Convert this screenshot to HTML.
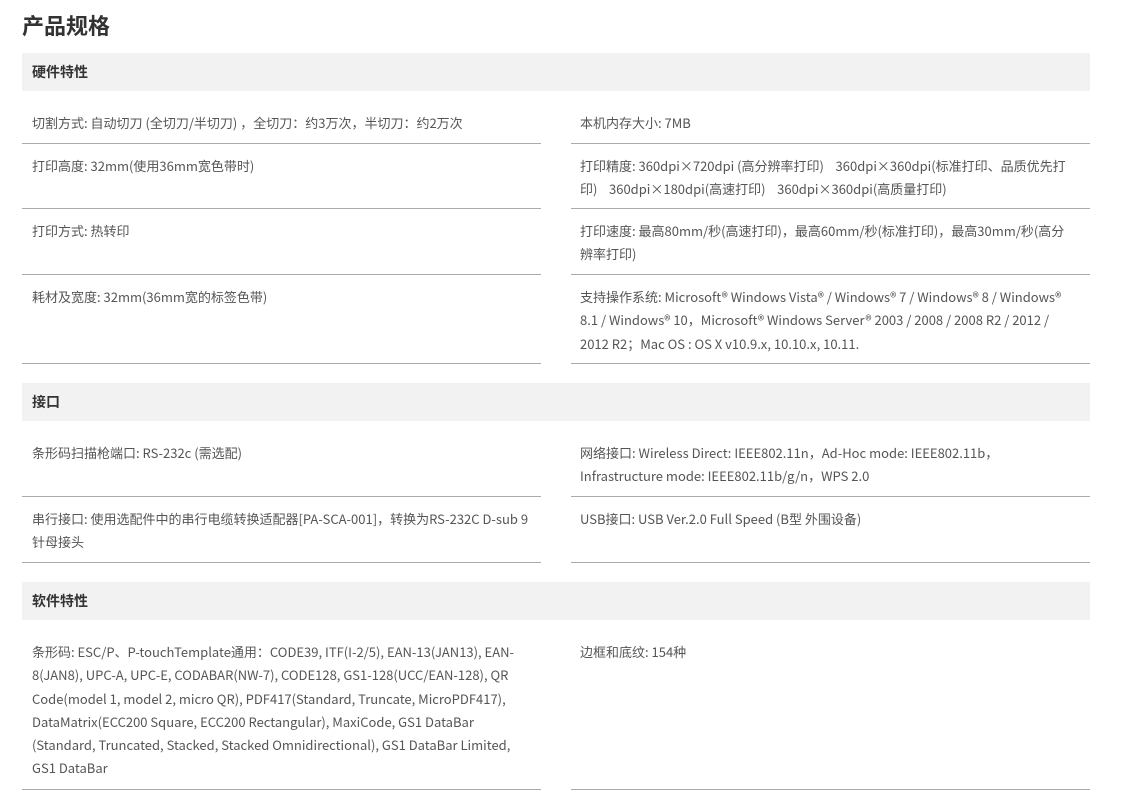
<html><head><style>
body{margin:0;background:#fff;font-family:"Liberation Sans","Noto Sans CJK SC",sans-serif;width:1124px;height:802px;position:relative;overflow:hidden}
h1{position:absolute;left:22px;top:9px;margin:0;font-size:22px;font-weight:bold;color:#333;line-height:32px;font-family:"Noto Sans CJK SC",sans-serif}
.h{position:absolute;left:22px;width:1068px;height:38px;background:#f2f2f2;font-size:14px;font-weight:bold;color:#333;line-height:38px;box-sizing:border-box;padding-left:10px;font-family:"Noto Sans CJK SC",sans-serif}
.c{position:absolute;width:519px;box-sizing:border-box;padding:10px 10px 0 10px;font-size:13px;line-height:23.3px;color:#555;border-bottom:1px solid #ababab;font-family:"Noto Sans CJK SC",sans-serif}
.l{left:22px}.r{left:571px;padding-left:9px;padding-right:13px}
</style></head><body>
<h1>产品规格</h1>
<div class="h" style="top:53px">硬件特性</div>
<div class="c l" style="top:101px;height:43px">切割方式: 自动切刀 (全切刀/半切刀) ，全切刀：约3万次，半切刀：约2万次</div>
<div class="c r" style="top:101px;height:43px">本机内存大小: 7MB</div>
<div class="c l" style="top:144px;height:65px">打印高度: 32mm(使用36mm宽色带时)</div>
<div class="c r" style="top:144px;height:65px">打印精度: 360dpi×720dpi (高分辨率打印)&nbsp;&nbsp;&nbsp; 360dpi×360dpi(标准打印、品质优先打印)&nbsp;&nbsp;&nbsp; 360dpi×180dpi(高速打印)&nbsp;&nbsp;&nbsp; 360dpi×360dpi(高质量打印)</div>
<div class="c l" style="top:209px;height:66px">打印方式: 热转印</div>
<div class="c r" style="top:209px;height:66px">打印速度: 最高80mm/秒(高速打印)，最高60mm/秒(标准打印)，最高30mm/秒(高分辨率打印)</div>
<div class="c l" style="top:275px;height:89px">耗材及宽度: 32mm(36mm宽的标签色带)</div>
<div class="c r" style="top:275px;height:89px">支持操作系统: Microsoft® Windows Vista® / Windows® 7 / Windows® 8 / Windows® 8.1 / Windows® 10，Microsoft® Windows Server® 2003 / 2008 / 2008 R2 / 2012 / 2012 R2；Mac OS : OS X v10.9.x, 10.10.x, 10.11.</div>
<div class="h" style="top:383px">接口</div>
<div class="c l" style="top:431px;height:66px">条形码扫描枪端口: RS-232c (需选配)</div>
<div class="c r" style="top:431px;height:66px">网络接口: Wireless Direct: IEEE802.11n，Ad-Hoc mode: IEEE802.11b，Infrastructure mode: IEEE802.11b/g/n，WPS 2.0</div>
<div class="c l" style="top:497px;height:66px">串行接口: 使用选配件中的串行电缆转换适配器[PA-SCA-001]，转换为RS-232C D-sub 9针母接头</div>
<div class="c r" style="top:497px;height:66px">USB接口: USB Ver.2.0 Full Speed (B型 外围设备)</div>
<div class="h" style="top:582px">软件特性</div>
<div class="c l" style="top:630px;height:160px">条形码: ESC/P、P-touchTemplate通用：CODE39, ITF(I-2/5), EAN-13(JAN13), EAN-8(JAN8), UPC-A, UPC-E, CODABAR(NW-7), CODE128, GS1-128(UCC/EAN-128), QR Code(model 1, model 2, micro QR), PDF417(Standard, Truncate, MicroPDF417), DataMatrix(ECC200 Square, ECC200 Rectangular), MaxiCode, GS1 DataBar (Standard, Truncated, Stacked, Stacked Omnidirectional), GS1 DataBar Limited, GS1 DataBar</div>
<div class="c r" style="top:630px;height:160px">边框和底纹: 154种</div>
</body></html>
